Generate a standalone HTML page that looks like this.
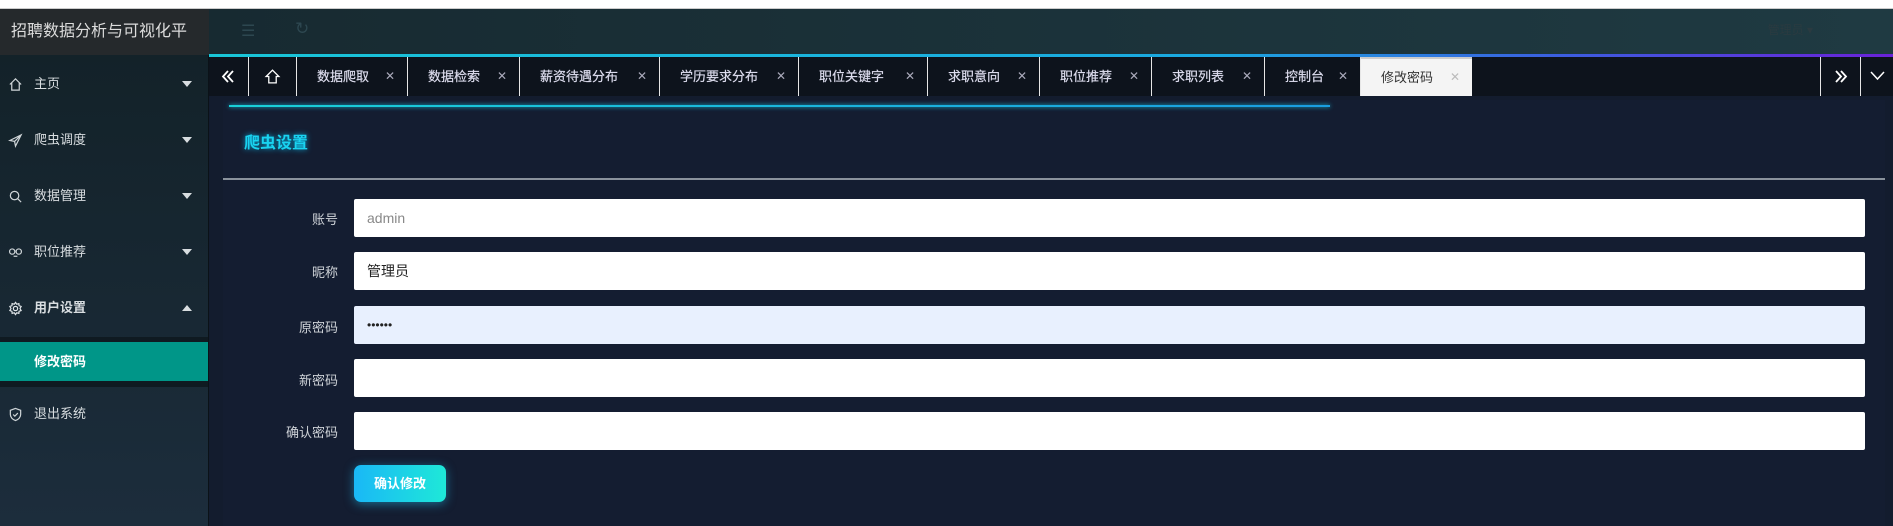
<!DOCTYPE html>
<html><head><meta charset="utf-8"><style>
*{margin:0;padding:0;box-sizing:border-box}
body{width:1893px;height:526px;overflow:hidden;background:#131c2e;font-family:"Liberation Sans","Noto Sans CJK SC",sans-serif;position:relative}
.abs{position:absolute}
#top{left:0;top:0;width:1893px;height:9px;background:#fff;border-bottom:1px solid #ccc}
#logo{left:0;top:9px;width:209px;height:46px;background:#25292c;color:#dcdcdc;font-size:16px;line-height:46px;padding-left:11px;white-space:nowrap;overflow:hidden}
#head{left:209px;top:9px;width:1684px;height:45px;background:linear-gradient(90deg,#172a31,#1f3a42)}
#line{left:209px;top:54px;width:1684px;height:3px;background:linear-gradient(90deg,#19c6d8,#1aa8e0 60%,#3b5fe0 80%,#6a22d8)}
#side{left:0;top:55px;width:209px;height:471px;background:linear-gradient(180deg,#132229,#1c2d3c);border-right:1px solid #0b1218}
.it{position:absolute;left:0;width:208px;height:40px;line-height:40px;color:#d8dde0;font-size:13px;padding-left:34px}
.ic{position:absolute;left:8px;top:13px;width:15px;height:15px}
.ar{position:absolute;left:182px;top:17px;width:0;height:0;border-left:5px solid transparent;border-right:5px solid transparent;border-top:6px solid #d8dde0}
.up{border-top:none;border-bottom:6px solid #d8dde0}
#tabs{left:209px;top:57px;width:1684px;height:39px;background:#0d131c}
.tab{position:absolute;top:0;height:39px;border-left:1px solid #e6e6e6;color:#dde;font-size:13px;line-height:39px;padding-left:20px;-webkit-text-stroke:0.2px #dde}
.tab .x{position:absolute;right:12px;top:0;color:#aab;font-size:12px;-webkit-text-stroke:0}
.tab svg{position:absolute}
#card{left:223px;top:100px;width:1662px;height:426px;background:#141d31}
.lab{position:absolute;width:120px;text-align:right;color:#cfd3d8;font-size:13px;left:218px}
.inp{position:absolute;left:354px;width:1511px;height:38px;background:#fff;border-radius:2px;font-size:14px;line-height:38px;padding-left:13px;color:#222}
</style></head><body>
<div id="top" class="abs"></div>
<div id="head" class="abs"><span style="position:absolute;left:32px;top:12px;color:#2d4750;font-size:16px">☰</span><span style="position:absolute;left:86px;top:10px;color:#2d4750;font-size:17px">↻</span><span style="position:absolute;right:80px;top:12px;color:#2a3a40;font-size:12px">管理员 ▾</span></div>
<div id="logo" class="abs">招聘数据分析与可视化平</div>
<div id="line" class="abs"></div>
<div id="side" class="abs">
<div class="it" style="top:9px"><svg class="ic" viewBox="0 0 16 16" fill="none" stroke="#cfd5d8" stroke-width="1.3"><path d="M2 8 L8 2 L14 8 M4 6.5 V14 H12 V6.5"/></svg>主页<span class="ar"></span></div>
<div class="it" style="top:65px"><svg class="ic" viewBox="0 0 16 16" fill="none" stroke="#cfd5d8" stroke-width="1.3"><path d="M14 2 L2 8 L7 9 L8 14 Z M7 9 L14 2"/></svg>爬虫调度<span class="ar"></span></div>
<div class="it" style="top:121px"><svg class="ic" viewBox="0 0 16 16" fill="none" stroke="#cfd5d8" stroke-width="1.3"><circle cx="7" cy="7" r="4.5"/><path d="M10.5 10.5 L14 14"/></svg>数据管理<span class="ar"></span></div>
<div class="it" style="top:177px"><svg class="ic" viewBox="0 0 16 16" fill="none" stroke="#cfd5d8" stroke-width="1.3"><circle cx="4.5" cy="7" r="2.8"/><circle cx="11.5" cy="7" r="2.8"/><path d="M6 12 H10"/></svg>职位推荐<span class="ar"></span></div>
<div class="it" style="top:233px;font-weight:bold"><svg class="ic" viewBox="0 0 16 16" fill="none" stroke="#e0e5e8" stroke-width="1.3"><circle cx="8" cy="8" r="2.3"/><path d="M8 1.5 L9.3 3.4 L11.6 2.8 L11.8 5 L14 5.8 L12.8 8 L14 10.2 L11.8 11 L11.6 13.2 L9.3 12.6 L8 14.5 L6.7 12.6 L4.4 13.2 L4.2 11 L2 10.2 L3.2 8 L2 5.8 L4.2 5 L4.4 2.8 L6.7 3.4 Z"/></svg>用户设置<span class="ar up"></span></div>
<div style="position:absolute;left:0;top:282px;width:208px;height:50px;background:#0f1a21"></div>
<div class="it" style="top:287px;height:39px;background:#009688;color:#fff;font-weight:bold">修改密码</div>
<div class="it" style="top:339px"><svg class="ic" viewBox="0 0 16 16" fill="none" stroke="#cfd5d8" stroke-width="1.3"><path d="M8 1.5 L13.5 3.5 V8 C13.5 11 11 13.5 8 14.5 C5 13.5 2.5 11 2.5 8 V3.5 Z"/><path d="M5.5 8 L7.3 9.8 L10.5 6.5"/></svg>退出系统</div>
</div>
<div id="tabs" class="abs">
<div class="tab" style="left:0;width:39px;border-left:none"><svg style="left:11px;top:12px" width="16" height="15" viewBox="0 0 16 15" fill="none" stroke="#fff" stroke-width="1.8"><path d="M8 2 L3 7.5 L8 13 M13 2 L8 7.5 L13 13"/></svg></div>
<div class="tab" style="left:39px;width:48px"><svg style="left:15px;top:11px" width="17" height="17" viewBox="0 0 16 16" fill="none" stroke="#fff" stroke-width="1.2"><path d="M2 8 L8 2 L14 8 H11.5 V14 H4.5 V8 Z"/></svg></div>
<div class="tab" style="left:87px;width:111px">数据爬取<span class="x">✕</span></div>
<div class="tab" style="left:198px;width:112px">数据检索<span class="x">✕</span></div>
<div class="tab" style="left:310px;width:140px">薪资待遇分布<span class="x">✕</span></div>
<div class="tab" style="left:450px;width:139px">学历要求分布<span class="x">✕</span></div>
<div class="tab" style="left:589px;width:129px">职位关键字<span class="x">✕</span></div>
<div class="tab" style="left:718px;width:112px">求职意向<span class="x">✕</span></div>
<div class="tab" style="left:830px;width:112px">职位推荐<span class="x">✕</span></div>
<div class="tab" style="left:942px;width:113px">求职列表<span class="x">✕</span></div>
<div class="tab" style="left:1055px;width:96px">控制台<span class="x">✕</span></div>
<div class="tab" style="left:1151px;width:112px;background:#f4f4f4;color:#333;-webkit-text-stroke:0;border-top:2px solid #ccc;line-height:37px">修改密码<span class="x" style="color:#bbb">✕</span></div>
<div class="tab" style="left:1611px;width:40px"><svg style="left:12px;top:12px" width="16" height="15" viewBox="0 0 16 15" fill="none" stroke="#fff" stroke-width="1.8"><path d="M3 2 L8 7.5 L3 13 M8 2 L13 7.5 L8 13"/></svg></div>
<div class="tab" style="left:1651px;width:33px"><svg style="left:9px;top:14px" width="15" height="10" viewBox="0 0 15 10" fill="none" stroke="#fff" stroke-width="1.5"><path d="M1 1 L7.5 8 L14 1"/></svg></div>
</div>
<div id="card" class="abs"></div>
<div class="abs" style="left:229px;top:105px;width:1101px;height:2px;background:linear-gradient(90deg,#19d0d8,#1a9de0);box-shadow:0 0 4px #19c0e0"></div>
<div class="abs" style="left:244px;top:129px;color:#19d3f0;font-weight:bold;font-size:16px;text-shadow:0 0 6px #0aa8d8">爬虫设置</div>
<div class="abs" style="left:223px;top:178px;width:1662px;height:2px;background:#8a929c"></div>
<div class="lab" style="top:209px">账号</div><div class="inp" style="top:199px;color:#888">admin</div>
<div class="lab" style="top:262px">昵称</div><div class="inp" style="top:252px">管理员</div>
<div class="lab" style="top:317px">原密码</div><div class="inp" style="top:306px;background:#e8f0fe;font-size:12px">••••••</div>
<div class="lab" style="top:370px">新密码</div><div class="inp" style="top:359px"></div>
<div class="lab" style="top:422px">确认密码</div><div class="inp" style="top:412px"></div>
<div class="abs" style="left:354px;top:465px;width:92px;height:37px;border-radius:7px;background:linear-gradient(90deg,#1ab8f6,#1ee8d8);color:#fff;font-weight:bold;font-size:13px;line-height:37px;text-align:center;box-shadow:0 2px 10px rgba(30,190,240,.5)">确认修改</div>
</body></html>
